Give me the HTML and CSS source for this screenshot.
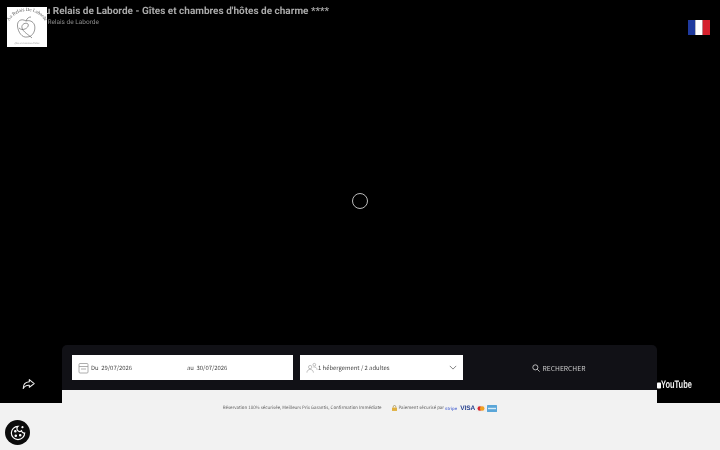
FILE: index.html
```html
<!DOCTYPE html>
<html lang="fr">
<head>
  <meta charset="UTF-8" />
  <title>Au Relais de Laborde</title>
  <link rel="stylesheet" href="styles.css">
</head>
<body>
  <section class="hero">
    <header class="top">
      <div class="titles">
        <h1>Au Relais de Laborde - Gîtes et chambres d'hôtes de charme ****</h1>
        <p>Au Relais de Laborde</p>
      </div>
      <svg class="flag" viewBox="0 0 22 15"><rect width="7.3" height="15" fill="#1f3a9e"/><rect x="7.3" width="7.4" height="15" fill="#fff"/><rect x="14.7" width="7.3" height="15" fill="#d5202c"/></svg>
    </header>

    <div class="logo">
      <svg viewBox="0 0 40 40">
        <defs><path id="arc" d="M1.500 15 A21 21 0 0 1 38.500 15"/></defs>
        <text class="logo-name"><textPath href="#arc" startOffset="50%" text-anchor="middle">Au Relais De Laborde</textPath></text>
        <g fill="none" stroke="#555" stroke-width=".6">
          <path d="M19 14 C14 11 10 14 10.500 19 C11 25 15 31 20 30 C26 30 29 23 27.500 18 C26 14 22 13 19 14 Z"/>
          <path d="M19 14 C20 11 22 10 24 10"/>
          <path d="M12 21 C16 25 23 20 21 17 C19 15 14 17 15 21 C16 25 22 28 25 31"/>
        </g>
        <text class="logo-sub" x="20" y="37" text-anchor="middle">gîtes et chambres d'hôtes</text>
      </svg>
    </div>

    <div class="loader"><div class="spinner"></div></div>

    <div class="bottom">
      <div class="side">
        <svg class="share" viewBox="0 0 16 14" fill="none" stroke="#eee" stroke-width="1.300" stroke-linejoin="round"><path d="M9 1.500 L15 6.500 L9 11 V8.500 C5.500 8.300 3 9.500 1.500 12.500 C1.500 8 4 4.700 9 4.300 Z"/></svg>
      </div>
      <div class="panel">
        <form class="search">
          <div class="field dates">
            <svg class="ico" viewBox="0 0 12 12" fill="none" stroke="#999" stroke-width=".8"><rect x="1" y="1.500" width="9" height="9.500" rx="1"/><path d="M1 4.500 H10 M3 7 H8"/></svg>
            <span class="date-from">Du&nbsp; 29/07/2026</span>
            <span>au&nbsp; 30/07/2026</span>
          </div>
          <div class="field guests">
            <svg class="ico people" viewBox="0 0 13 12" fill="none" stroke="#aaa" stroke-width=".8"><circle cx="4.500" cy="5" r="1.800"/><path d="M1 11 C1 8.500 3 7.500 4.500 7.500 C6 7.500 8 8.500 8 11"/><circle cx="9" cy="2.500" r="1.500"/><path d="M8 5 C10 4.500 12 5.500 12 8"/></svg>
            <span>1 hébergement / 2 adultes</span>
            <svg class="chevron" viewBox="0 0 10 6" fill="none" stroke="#555" stroke-width=".9"><path d="M1 1 L5 5 L9 1"/></svg>
          </div>
          <button type="button" class="submit">
            <svg viewBox="0 0 10 10" fill="none" stroke="#ddd" stroke-width="1"><circle cx="4.200" cy="4.200" r="3.200"/><path d="M6.600 6.600 L9.500 9.500"/></svg>
            RECHERCHER
          </button>
        </form>
        <div class="strip"></div>
      </div>
      <div class="side yt">
        <svg class="yt-mark" viewBox="0 0 6 9"><rect width="6" height="9" rx="1.200" fill="#fff"/></svg>
        <span class="yt-word">YouTube</span>
      </div>
    </div>
  </section>

  <footer class="foot">
    <div class="reassure">
      <span>Réservation 100% sécurisée, Meilleurs Prix Garantis, Confirmation Immédiate</span>
      <span class="secure">
        <svg class="lock" viewBox="0 0 6 7"><path d="M1.500 3 V2 A1.500 1.500 0 0 1 4.500 2 V3" fill="none" stroke="#8a7430" stroke-width=".7"/><rect y="3" width="6" height="4" fill="#e0b040"/></svg>
        Paiement sécurisé par <b class="stripe">stripe</b>
        <b class="visa">VISA</b>
        <svg class="card" viewBox="0 0 10 7"><rect width="10" height="7" rx=".6" fill="#eee"/><circle cx="3.800" cy="3.500" r="2.300" fill="#d8262c"/><circle cx="6.200" cy="3.500" r="2.300" fill="#f2a01e"/></svg>
        <svg class="card" viewBox="0 0 10 7"><rect width="10" height="7" rx=".6" fill="#5aa6d8"/><rect x="1" y="2.800" width="8" height="1.400" fill="#d6ecf7"/></svg>
      </span>
    </div>
    <button class="cookie">
      <svg viewBox="0 0 18 18" fill="none" stroke="#fff" stroke-width="1.300"><path d="M9 1.500 A7.500 7.500 0 1 0 16.500 9 A3 3 0 0 1 13 6.500 A3 3 0 0 1 9 1.500 Z"/><circle cx="6" cy="7" r=".8" fill="#fff"/><circle cx="6.500" cy="12" r=".8" fill="#fff"/><circle cx="11.500" cy="11.500" r=".8" fill="#fff"/><circle cx="14" cy="2.500" r=".6" fill="#fff"/></svg>
    </button>
  </footer>
</body>
</html>
```

FILE: styles.css
```css
* {
  box-sizing: border-box;
  margin: 0;
  padding: 0;
}

html, body {
  height: 450px;
  overflow: hidden;
}

body {
  font-family: "Noto Sans CJK JP", "Noto Sans", sans-serif;
  text-rendering: geometricPrecision;
  background: #f2f2f2;
  color: #333;
  display: flex;
  flex-direction: column;
}

.hero {
  height: 403px;
  background: #000;
  display: flex;
  flex-direction: column;
  position: relative;
  filter: blur(.3px);
}

.top {
  height: 55px;
  padding: 5px 10px 0 38px;
  display: flex;
  justify-content: space-between;
  align-items: flex-start;
}

.titles h1 {
  font-family: Roboto, sans-serif;
  font-size: 10px;
  font-weight: 700;
  line-height: 14px;
  color: #aaa;
}

.titles p {
  font-family: Roboto, sans-serif;
  font-size: 6.500px;
  line-height: 8px;
  margin-top: -1px;
  color: #8c8c8c;
}

.flag {
  width: 22px;
  height: 15px;
  margin-top: 15px;
}

.logo {
  position: absolute;
  left: 7px;
  top: 7px;
  width: 40px;
  height: 40px;
  background: #fff;
}

.logo-name {
  font-family: "Liberation Serif", serif;
  font-size: 4.800px;
  fill: #555;
}

.logo-sub {
  font-family: "Liberation Serif", serif;
  font-size: 2.500px;
  fill: #999;
}

.loader {
  flex: 1;
  display: flex;
  align-items: center;
  justify-content: center;
  padding-top: 2px;
}

.spinner {
  width: 16px;
  height: 16px;
  border-radius: 50%;
  border: 1.300px solid #bbb;
}

.bottom {
  display: grid;
  grid-template-columns: 62px 595px 63px;
}

.side {
  height: 45px;
  display: flex;
  align-items: flex-end;
  justify-content: center;
}

.share {
  width: 13px;
  height: 12px;
  margin-left: -5px;
}

.panel {
  display: flex;
  flex-direction: column;
}

.search {
  height: 45px;
  background: #111116;
  border-radius: 5px 5px 0 0;
  padding: 10px;
  display: flex;
  gap: 7px;
}

.field {
  height: 25px;
  background: #fff;
  display: flex;
  align-items: center;
  font-size: 5.900px;
  color: #444;
}

.dates {
  width: 221px;
  padding-left: 6px;
}

.ico {
  width: 12px;
  height: 12px;
  margin-right: 1px;
  flex: none;
}

.date-from {
  width: 96px;
}

.guests {
  width: 163px;
  padding: 0 6px;
}

.people {
  width: 12px;
  margin-right: 0;
}

.chevron {
  width: 8px;
  height: 5px;
  margin-left: auto;
}

.submit {
  flex: 1;
  background: none;
  border: none;
  color: #ccc;
  font: inherit;
  font-size: 6.700px;
  display: flex;
  align-items: center;
  justify-content: center;
  gap: 3px;
}

.submit svg {
  width: 8px;
  height: 8px;
}

.strip {
  height: 13px;
  background: #f2f2f2;
}

.foot {
  flex: 1;
  background: #f2f2f2;
  filter: blur(.3px);
}

.reassure {
  height: 10px;
  display: flex;
  align-items: center;
  justify-content: center;
  gap: 11px;
  font-size: 4.450px;
  color: #666;
  white-space: nowrap;
}

.secure {
  display: flex;
  align-items: center;
  gap: 1px;
}

.lock {
  width: 5px;
  height: 6px;
}

.stripe {
  color: #6a7fd8;
  font-family: "Liberation Sans", sans-serif;
}

.visa {
  color: #27418e;
  font-family: "Liberation Sans", sans-serif;
  font-size: 6.500px;
  margin-left: 2px;
}

.card {
  width: 10px;
  height: 7px;
}

.yt {
  justify-content: flex-start;
  color: #eee;
  font-family: "Liberation Sans", sans-serif;
  font-size: 11px;
  font-weight: bold;
  line-height: 10px;
  gap: 0;
}

.yt-mark {
  width: 4px;
  height: 9px;
}

.yt-word {
  transform: scaleX(.68);
  transform-origin: left;
}

.cookie {
  width: 25px;
  height: 25px;
  margin: 7px 0 0 5px;
  border: none;
  border-radius: 50%;
  background: #0c0c0c;
  display: flex;
  align-items: center;
  justify-content: center;
}

.cookie svg {
  width: 16px;
  height: 16px;
}
```
